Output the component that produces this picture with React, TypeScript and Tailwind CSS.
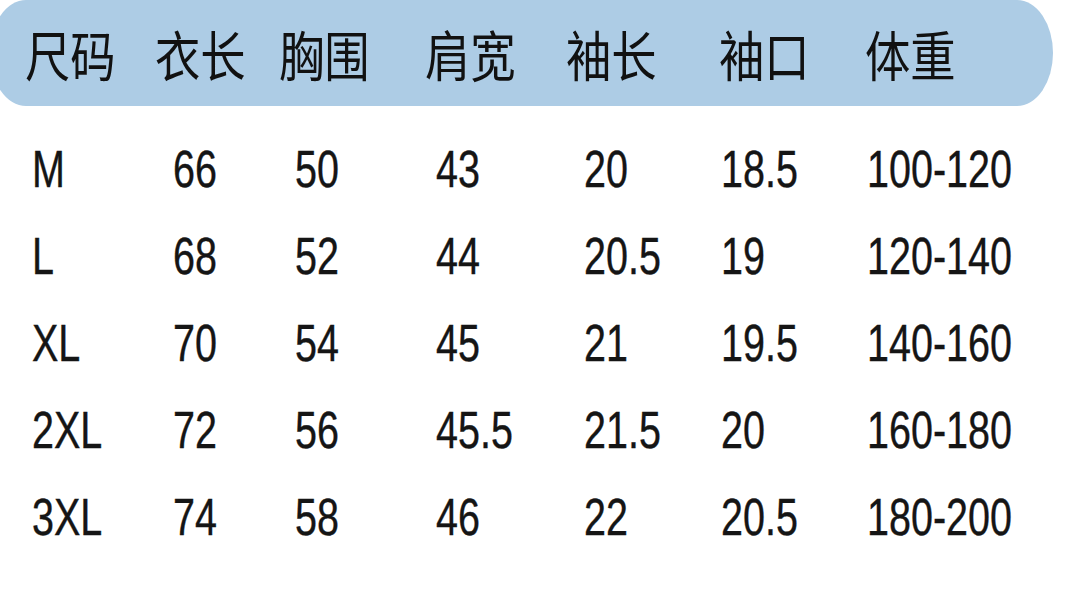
import React from 'react';

const HEAD = ['尺码', '衣长', '胸围', '肩宽', '袖长', '袖口', '体重'];

// widths of the header cells, measured from the chart
const HEAD_W = ['w-[130px]', 'w-[124px]', 'w-[146px]', 'w-[141px]', 'w-[153px]', 'w-[146px]', 'flex-1'];
// widths of the data cells (digits sit a touch right of the titles)
const CELL_W = ['w-[141px]', 'w-[122px]', 'w-[141px]', 'w-[148px]', 'w-[137px]', 'w-[146px]', 'flex-1'];

const ROWS = [
    ['M', '66', '50', '43', '20', '18.5', '100-120'],
    ['L', '68', '52', '44', '20.5', '19', '120-140'],
    ['XL', '70', '54', '45', '21', '19.5', '140-160'],
    ['2XL', '72', '56', '45.5', '21.5', '20', '160-180'],
    ['3XL', '74', '58', '46', '22', '20.5', '180-200'],
];

export default function App() {
    return (
        <div className="w-[1080px] h-[594px] overflow-hidden bg-white text-[#151515]">
            {/* header band */}
            <div className="-ml-[10px] w-[1063px] h-[106px] flex items-center pl-[35px] pt-[2px] bg-[#adcce5] rounded-tl-[36px_53px] rounded-bl-[36px_53px] rounded-tr-[36px_53px] rounded-br-[36px_53px]">
                {HEAD.map((h, i) => (
                    <div key={h} className={`${HEAD_W[i]} shrink-0 leading-none`}>
                        <span className="inline-block origin-left scale-x-[0.84] text-[54px] text-[#111] font-['Noto_Sans_CJK_SC','Noto_Sans',sans-serif]">
                            {h}
                        </span>
                    </div>
                ))}
            </div>

            {/* size rows */}
            <div className="pt-[26px]">
                {ROWS.map(row => (
                    <div key={row[0]} className="h-[87px] flex items-center pl-[32px]">
                        {row.map((v, i) => (
                            <div key={i} className={`${CELL_W[i]} shrink-0 leading-[87px]`}>
                                <span className="inline-block origin-left scale-x-[0.76] text-[52px] [-webkit-text-stroke:0.4px_#151515] font-['Liberation_Sans',Arial,sans-serif]">
                                    {v}
                                </span>
                            </div>
                        ))}
                    </div>
                ))}
            </div>
        </div>
    );
}
